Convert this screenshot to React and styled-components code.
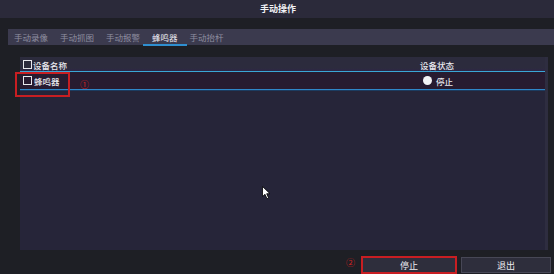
import React from "react";
import styled, { createGlobalStyle } from "styled-components";

const Global = createGlobalStyle`
  html, body { margin: 0; padding: 0; background: #1e1f25; }
  body { font-family: "Noto Sans CJK SC", "Noto Sans", sans-serif; }
`;

const Frame = styled.div`
  position: relative;
  width: 554px;
  height: 274px;
  overflow: hidden;
  background: #1e1f25;
  display: flex;
  flex-direction: column;
`;

const TitleBar = styled.div`
  height: 18px;
  background: #2b2a3a;
  color: #f2f2f6;
  font-size: 9px;
  font-weight: 600;
  line-height: 18px;
  text-align: center;
  padding-left: 2px;
`;

const TabBar = styled.div`
  margin: 11px 0 0 8px;
  height: 16px;
  background: #3b3a4e;
  display: flex;
  align-items: center;
`;

const Tab = styled.div`
  position: relative;
  height: 16px;
  line-height: 16px;
  padding: 0 6px;
  font-size: 8.5px;
  color: ${(p) => (p.$active ? "#ececf2" : "#8f8fa0")};
  &::after {
    content: "";
    display: ${(p) => (p.$active ? "block" : "none")};
    position: absolute;
    left: -3px;
    right: -3px;
    bottom: -1px;
    height: 2px;
    background: #2f8fd0;
  }
`;

const Workspace = styled.div`
  display: flex;
  margin: 12px 0 0 20px;
  height: 193px;
`;

const Panel = styled.div`
  position: relative;
  width: 525px;
  background: #262539;
  display: flex;
  flex-direction: column;
`;

const ScrollTrack = styled.div`
  width: 3px;
  background: #2e2d40;
`;

const Row = styled.div`
  display: grid;
  grid-template-columns: 397px 1fr;
  align-items: center;
  height: ${(p) => p.$h}px;
  padding-left: 3px;
  background: ${(p) => p.$bg};
  color: #e8e8ee;
  font-size: 8.5px;
  font-weight: 500;
`;

const Cell = styled.div`
  display: flex;
  align-items: center;
  gap: ${(p) => p.$gap || 1}px;
  padding-top: ${(p) => p.$pt || 0}px;
  padding-left: ${(p) => p.$pl || 0}px;
`;

const Divider = styled.div`
  height: 1px;
  background: ${(p) => p.$color};
  box-shadow: 0 1px 0 ${(p) => p.$shade};
`;

const Checkbox = styled.span`
  width: 7px;
  height: 7px;
  border: 1px solid #e8e8ee;
  display: inline-block;
`;

const Dot = styled.span`
  width: 9px;
  height: 9px;
  border-radius: 50%;
  background: #f4f4f6;
  display: inline-block;
`;

const Annotation = styled.div`
  position: absolute;
  left: -5px;
  top: 15px;
  width: 51px;
  height: 21px;
  border: 2px solid #c81e22;
`;

const Marker = styled.span`
  position: absolute;
  left: ${(p) => p.$x}px;
  top: ${(p) => p.$y}px;
  color: #d62222;
  font-size: 9px;
  line-height: 10px;
`;

const Footer = styled.div`
  position: relative;
  display: flex;
  justify-content: flex-end;
  align-items: center;
  gap: 4px;
  padding-right: 3px;
  margin-top: 6px;
  height: 18px;
`;

const Button = styled.div`
  box-sizing: border-box;
  width: ${(p) => p.$w}px;
  height: ${(p) => (p.$danger ? 18 : 16)}px;
  background: #2e2e3c;
  border: ${(p) => (p.$danger ? "2px solid #c81e22" : "1px solid #474756")};
  color: #ececf2;
  font-size: 9px;
  display: flex;
  align-items: center;
  justify-content: center;
`;

const Cursor = styled.svg`
  position: absolute;
  left: 262px;
  top: 186px;
`;

export default function App() {
  const tabs = ["手动录像", "手动抓图", "手动报警", "蜂鸣器", "手动抬杆"];
  return (
    <Frame>
      <Global />
      <TitleBar>手动操作</TitleBar>
      <TabBar>
        {tabs.map((t) => (
          <Tab key={t} $active={t === "蜂鸣器"}>{t}</Tab>
        ))}
      </TabBar>
      <Workspace>
        <Panel>
          <Row $h={14} $bg="linear-gradient(#2c2b3d 0 80%, #2e2447 100%)">
            <Cell $pt={1}><Checkbox />设备名称</Cell>
            <Cell $pt={1}>设备状态</Cell>
          </Row>
          <Divider $color="#3aa6d6" $shade="#1f4f6e" />
          <Row $h={17} $bg="#271b30">
            <Cell $gap={2}><Checkbox />蜂鸣器</Cell>
            <Cell $gap={4} $pl={3}><Dot />停止</Cell>
          </Row>
          <Divider $color="#2f86c8" $shade="#1c3c60" />
          <Annotation />
          <Marker $x={60} $y={23}>①</Marker>
        </Panel>
        <ScrollTrack />
      </Workspace>
      <Footer>
        <Marker $x={346} $y={2}>②</Marker>
        <Button $w={96} $danger>停止</Button>
        <Button $w={90}>退出</Button>
      </Footer>
      <Cursor width="9" height="14" viewBox="0 0 9 14">
        <path d="M0.5 0.5 L0.5 10.5 L3 8.3 L5 12.8 L6.6 12 L4.7 7.7 L8 7.7 Z" fill="#ffffff" stroke="#000000" strokeWidth="0.8" />
      </Cursor>
    </Frame>
  );
}
